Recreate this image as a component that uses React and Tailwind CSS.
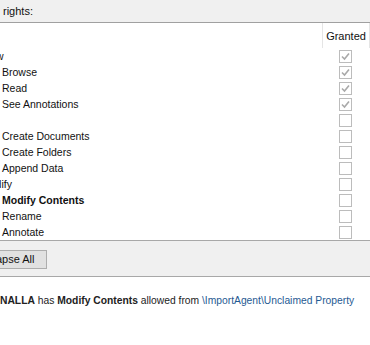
import React from "react";

const rows = [
  { label: "View", parent: true, shift: "-ml-[19px]", checked: true },
  { label: "Browse", checked: true },
  { label: "Read", checked: true },
  { label: "See Annotations", checked: true },
  { label: "Add", parent: true, shift: "-ml-[30px]", checked: false },
  { label: "Create Documents", checked: false },
  { label: "Create Folders", checked: false },
  { label: "Append Data", checked: false },
  { label: "Modify", parent: true, shift: "-ml-[19px]", checked: false },
  { label: "Modify Contents", bold: true, checked: false },
  { label: "Rename", checked: false },
  { label: "Annotate", checked: false },
];

function Box({ checked }) {
  return (
    <div className="w-[13px] h-[13px] border border-[#bcbcbc] bg-white flex items-center justify-center">
      {checked && (
        <svg width="11" height="11" viewBox="0 0 11 11">
          <path d="M2 5.5 L4.5 8 L9 2.5" fill="none" stroke="#a9a9a9" strokeWidth="1.6" />
        </svg>
      )}
    </div>
  );
}

export default function App() {
  return (
    <div
      className="w-[370px] h-[345px] bg-white overflow-hidden text-[#111] text-[10.5px]"
      style={{ fontFamily: '"Liberation Sans", Arial, sans-serif' }}
    >
      <div className="h-[23px] bg-[#f0f0f0] border-b border-[#a0a0a0] flex items-center pl-[3px] text-[11px]">
        rights:
      </div>
      <div className="h-[217px] flex flex-col">
        <div className="h-[25px] flex justify-end">
          <div className="w-[48px] border-l border-r border-[#e5e5e5] flex items-center justify-center pt-[1px] text-[11px]">
            Granted
          </div>
        </div>
        {rows.map((r, i) => (
          <div key={i} className="h-[16px] flex items-center">
            <div className="flex-1 overflow-hidden whitespace-nowrap pt-[1px]">
              <span
                className={
                  (r.parent ? "inline-block " + r.shift : "inline-block pl-[2px]") +
                  (r.bold ? " font-bold" : "")
                }
              >
                {r.label}
              </span>
            </div>
            <div className="w-[48px] flex justify-center pr-[1px]">
              <Box checked={r.checked} />
            </div>
          </div>
        ))}
      </div>
      <div className="h-[37px] bg-[#f0f0f0] border-t border-b border-[#a8a8a8] flex items-start pt-[9px] overflow-hidden">
        <div className="h-[19px] -ml-[26px] pr-[12px] pl-[2px] bg-[#e1e1e1] border border-[#adadad] flex items-center whitespace-nowrap text-[11px]">
          Collapse All
        </div>
      </div>
      <div className="pt-[16px] whitespace-nowrap text-[10.3px] text-[#222]">
        <span className="font-bold">NALLA</span> has <span className="font-bold">Modify Contents</span> allowed from{" "}
        <span className="text-[#1f5a93]">\ImportAgent\Unclaimed Property</span>
      </div>
    </div>
  );
}
